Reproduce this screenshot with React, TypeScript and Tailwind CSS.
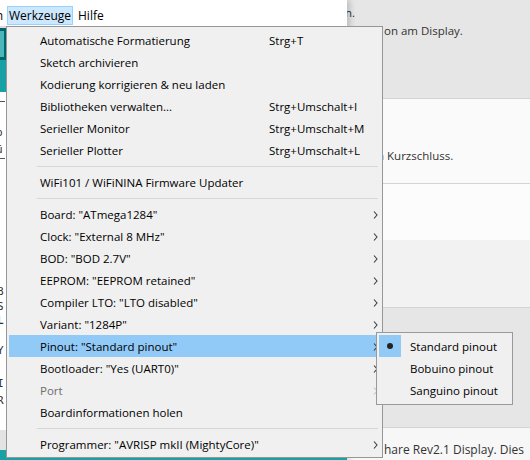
import React from 'react';

const menuFont = { fontFamily: '"Open Sans", "Noto Sans", sans-serif' };

type Item =
  | { sep: true }
  | { label: string; shortcut?: string; sub?: boolean; disabled?: boolean; active?: boolean };

const items: Item[] = [
  { label: 'Automatische Formatierung', shortcut: 'Strg+T' },
  { label: 'Sketch archivieren' },
  { label: 'Kodierung korrigieren & neu laden' },
  { label: 'Bibliotheken verwalten...', shortcut: 'Strg+Umschalt+I' },
  { label: 'Serieller Monitor', shortcut: 'Strg+Umschalt+M' },
  { label: 'Serieller Plotter', shortcut: 'Strg+Umschalt+L' },
  { sep: true },
  { label: 'WiFi101 / WiFiNINA Firmware Updater' },
  { sep: true },
  { label: 'Board: "ATmega1284"', sub: true },
  { label: 'Clock: "External 8 MHz"', sub: true },
  { label: 'BOD: "BOD 2.7V"', sub: true },
  { label: 'EEPROM: "EEPROM retained"', sub: true },
  { label: 'Compiler LTO: "LTO disabled"', sub: true },
  { label: 'Variant: "1284P"', sub: true },
  { label: 'Pinout: "Standard pinout"', sub: true, active: true },
  { label: 'Bootloader: "Yes (UART0)"', sub: true },
  { label: 'Port', sub: true, disabled: true },
  { label: 'Boardinformationen holen' },
  { sep: true },
  { label: 'Programmer: "AVRISP mkII (MightyCore)"', sub: true },
];

const Chevron = ({ light }: { light?: boolean }) => (
  <svg width="5" height="8" viewBox="0 0 5 8" className="shrink-0">
    <path d="M1 0.5 L4 4 L1 7.5" fill="none" stroke={light ? '#c4c4c4' : '#3c3c3c'} strokeWidth="1.1" />
  </svg>
);

const App: React.FC = () => {
  return (
    <div className="relative w-[530px] h-[460px] overflow-hidden bg-[#e6e6e6]" style={menuFont}>
      {/* web page behind the IDE */}
      <div className="flex flex-col h-full text-[11.5px] text-[#333]">
        <div className="h-[99px] bg-[#e6e6e6] border-b border-[#d4d4d4] flex flex-col">
          <div className="pl-[345px] pt-[4px] leading-[18px]">n.</div>
          <div className="pl-[384px] leading-[18px]">on am Display.</div>
        </div>
        <div className="h-[85px] bg-[#fafafa] border-b border-[#d4d4d4] pl-[377px] pt-[48px] leading-[18px] whitespace-nowrap">
          n Kurzschluss.
        </div>
        <div className="h-[56px] bg-[#fcfcfc]" />
        <div className="h-[68px] bg-[#f2f2f2] border-b border-[#d4d4d4]" />
        <div className="h-[120px] bg-[#e6e6e6] border-b border-[#d4d4d4]" />
        <div className="flex-1 bg-[#f7f7f7] pl-[384px] pt-[13px] leading-[18px] whitespace-nowrap text-[12px]">
          hare Rev2.1 Display. Dies
        </div>
      </div>

      {/* Arduino IDE window */}
      <div className="absolute left-0 top-0 w-[347px] h-[460px] flex flex-col bg-white shadow-[3px_0_6px_rgba(0,0,0,0.18)]">
        <div className="h-[26px] bg-white flex items-end text-[12px] text-black whitespace-nowrap">
          <div className="-ml-[62px] w-[66px] h-[19px] flex items-center justify-end pr-[1px] mb-[1px]">Bearbeiten</div>
          <div className="ml-[3px] w-[66px] h-[19px] mb-[1px] bg-[#cce8ff] border border-[#99d1ff] flex items-center justify-center">
            Werkzeuge
          </div>
          <div className="h-[19px] mb-[1px] flex items-center pl-[5px]">Hilfe</div>
        </div>
        <div className="h-[2px] bg-[#dcdcdc]" />
        <div className="h-[32px] bg-[#006468] flex items-center">
          <div className="w-[4px] h-[26px] bg-[#4db6ba]" />
        </div>
        <div className="h-[32px] bg-[#17a1a5]" />
        <div className="flex-1 bg-white flex flex-col text-[11px] text-[#333] leading-[17px]" style={{ fontFamily: '"DejaVu Sans Mono", monospace' }}>
          <div className="h-[10px] border-b border-[#555] w-[5px]" />
          <div className="pt-[22px] -ml-[4px]">p</div>
          <div className="-ml-[4px]">ü</div>
          <div className="h-[1px] bg-[#555] w-[5px]" />
          <div className="h-[124px]" />
          <div className="-ml-[3px]">B</div>
          <div className="-ml-[3px] leading-[14px]">S</div>
          <div className="-ml-[3px] leading-[14px] font-bold">L</div>
          <div className="-ml-[3px] pt-[14px]">Y</div>
          <div className="-ml-[3px] pt-[16px]">I</div>
          <div className="-ml-[3px]">R</div>
        </div>
        <div className="h-[20px] bg-[#e3e3e3]" />
        <div className="h-[10px] bg-[#17a1a5]" />
      </div>

      {/* Werkzeuge dropdown */}
      <div className="absolute left-[6px] top-[26px] w-[377px] bg-[#f0f0f0] border border-[#979797] p-[2px] text-[11.5px] text-black">
        {items.map((it, i) =>
          'sep' in it ? (
            <div key={i} className="h-[10px] flex items-center">
              <div className="ml-[28px] mr-[2px] flex-1 h-px bg-[#d7d7d7]" />
            </div>
          ) : (
            <div
              key={i}
              className={`h-[22px] flex items-center whitespace-nowrap pt-[1px] ${it.active ? 'bg-[#91c9f7]' : ''} ${it.disabled ? 'text-[#6d6d6d]' : ''}`}
            >
              <div className="w-[260px] pl-[31px]">{it.label}</div>
              <div className="flex-1">{it.shortcut}</div>
              {it.sub && (
                <div className="pr-[2px]">
                  <Chevron light={it.disabled} />
                </div>
              )}
            </div>
          )
        )}
      </div>

      {/* Pinout submenu */}
      <div className="absolute left-[376px] top-[332px] w-[137px] bg-[#f0f0f0] border border-[#999] px-[2px] pt-[2px] pb-[3px] text-[11.5px] text-black">
        {['Standard pinout', 'Bobuino pinout', 'Sanguino pinout'].map((s, i) => (
          <div key={s} className="h-[22px] flex items-center whitespace-nowrap">
            <div className={`w-[22px] h-[22px] flex items-center justify-center ${i === 0 ? 'bg-[#91c9f7]' : ''}`}>
              {i === 0 && <div className="w-[6px] h-[6px] rounded-full bg-[#222]" />}
            </div>
            <div className="pl-[9px] pt-[1px]">{s}</div>
          </div>
        ))}
      </div>
    </div>
  );
};

export default App;
